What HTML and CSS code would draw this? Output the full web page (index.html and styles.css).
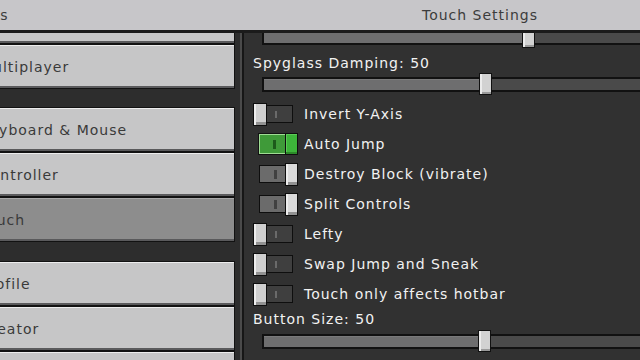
FILE: index.html
```html
<!DOCTYPE html>
<html>
<head>
<meta charset="utf-8">
<link rel="stylesheet" href="styles.css">
</head>
<body>
<div class="screen">
  <header class="header">
    <div class="header-left"><span class="header-back">Settings</span></div>
    <div class="header-title">Touch Settings</div>
  </header>
  <main class="main">
    <nav class="nav">
      <div class="nav-list">
        <div class="group group-first">
          <div class="nav-btn">Video</div>
          <div class="nav-btn">Multiplayer</div>
        </div>
        <div class="group group-mid">
          <div class="nav-btn">Keyboard &amp; Mouse</div>
          <div class="nav-btn">Controller</div>
          <div class="nav-btn is-active">Touch</div>
        </div>
        <div class="group group-last">
          <div class="nav-btn">Profile</div>
          <div class="nav-btn">Creator</div>
          <div class="nav-btn">Accessibility</div>
        </div>
      </div>
    </nav>
    <div class="divider"></div>
    <section class="panel">
      <div class="slider slider-top">
        <div class="slider-fill" style="width:260px"></div>
        <div class="slider-knob"></div>
        <div class="slider-rest"></div>
      </div>
      <div class="setting-label label-spyglass">Spyglass Damping: 50</div>
      <div class="slider slider-mid">
        <div class="slider-fill" style="width:217px"></div>
        <div class="slider-knob"></div>
        <div class="slider-rest"></div>
      </div>
      <div class="toggles">
        <div class="toggle-row">
          <div class="toggle is-off"><div class="knob"></div><div class="track"><div class="notch"></div></div></div>
          <div class="toggle-label">Invert Y-Axis</div>
        </div>
        <div class="toggle-row">
          <div class="toggle is-on"><div class="track"><div class="notch"></div></div><div class="knob"></div></div>
          <div class="toggle-label">Auto Jump</div>
        </div>
        <div class="toggle-row">
          <div class="toggle is-locked"><div class="track"><div class="notch"></div></div><div class="knob"></div></div>
          <div class="toggle-label">Destroy Block (vibrate)</div>
        </div>
        <div class="toggle-row">
          <div class="toggle is-locked"><div class="track"><div class="notch"></div></div><div class="knob"></div></div>
          <div class="toggle-label">Split Controls</div>
        </div>
        <div class="toggle-row">
          <div class="toggle is-off"><div class="knob"></div><div class="track"><div class="notch"></div></div></div>
          <div class="toggle-label">Lefty</div>
        </div>
        <div class="toggle-row">
          <div class="toggle is-off"><div class="knob"></div><div class="track"><div class="notch"></div></div></div>
          <div class="toggle-label">Swap Jump and Sneak</div>
        </div>
        <div class="toggle-row">
          <div class="toggle is-off"><div class="knob"></div><div class="track"><div class="notch"></div></div></div>
          <div class="toggle-label">Touch only affects hotbar</div>
        </div>
      </div>
      <div class="setting-label label-size">Button Size: 50</div>
      <div class="slider slider-bottom">
        <div class="slider-fill" style="width:216px"></div>
        <div class="slider-knob"></div>
        <div class="slider-rest"></div>
      </div>
    </section>
  </main>
</div>
</body>
</html>
```
FILE: styles.css
```css
html, body {
  margin: 0;
  padding: 0;
}
body {
  width: 640px;
  height: 360px;
  overflow: hidden;
  background: #303030;
  font-family: "DejaVu Sans", "Noto Sans", sans-serif;
  font-size: 14px;
  letter-spacing: 1px;
}
.screen {
  width: 640px;
  height: 360px;
  display: flex;
  flex-direction: column;
}
.header {
  display: flex;
  align-items: center;
  height: 30px;
  flex-shrink: 0;
  background: #c7c6c9;
  border-bottom: 3px solid #1b1b1b;
  color: #3c3c3c;
  white-space: nowrap;
}
.header-left {
  width: 244px;
  overflow: hidden;
  flex-shrink: 0;
}
.header-back {
  display: inline-block;
  margin-left: -57px;
}
.header-title {
  flex: 1;
  text-align: center;
  padding-left: 76px;
}
.main {
  display: flex;
  flex: 1;
  min-height: 0;
}
.nav {
  width: 240px;
  flex-shrink: 0;
  overflow: hidden;
  background: #2d2d2d;
}
.nav-list {
  margin-left: -40px;
  width: 275px;
  display: flex;
  flex-direction: column;
}
.group {
  display: flex;
  flex-direction: column;
}
.group-first {
  margin-top: -34px;
}
.group-mid {
  margin-top: 18px;
}
.group-last {
  margin-top: 19px;
}
.nav-btn {
  height: 45px;
  box-sizing: border-box;
  flex-shrink: 0;
  border: 1px solid #121212;
  background: #c6c6c7;
  box-shadow: inset 0 1px #ededed, inset 0 -2px #5a5a5c;
  color: #3a3a3a;
  padding-left: 19px;
  display: flex;
  align-items: center;
  white-space: nowrap;
}
.nav-btn.is-active {
  background: #8d8d8d;
  box-shadow: inset 0 1px #a9a9a9, inset 0 -2px #5a5a5c;
}
.divider {
  width: 0;
  border-left: 2px solid #4a4a4a;
  border-right: 2px solid #161616;
  flex-shrink: 0;
}
.panel {
  flex: 1;
  overflow: hidden;
  padding-left: 9px;
  display: flex;
  flex-direction: column;
  background: #313131;
}
.slider {
  display: flex;
  align-items: center;
  height: 22px;
  margin-left: 9px;
  width: 440px;
  flex-shrink: 0;
}
.slider-top {
  margin-top: -7px;
}
.slider-mid {
  margin-top: 2px;
}
.slider-bottom {
  margin-top: 3px;
}
.slider-fill {
  height: 15px;
  box-sizing: border-box;
  border: 2px solid #111;
  border-right: none;
  background: #6e6e6f;
  box-shadow: inset 0 1px #7a7a7b;
  flex-shrink: 0;
}
.slider-knob {
  width: 13px;
  height: 22px;
  box-sizing: border-box;
  border: 1px solid #111;
  background: #d2d2d2;
  box-shadow: inset 2px 0 #ececec, inset 0 -2px #9a9a9a;
  flex-shrink: 0;
}
.slider-rest {
  flex: 1;
  height: 15px;
  box-sizing: border-box;
  border: 2px solid #111;
  border-left: none;
  background: #4a4a4a;
}
.setting-label {
  height: 16px;
  line-height: 16px;
  color: #f2f2f2;
  white-space: nowrap;
  flex-shrink: 0;
}
.label-spyglass {
  margin-top: 7px;
}
.label-size {
  margin-top: 2px;
}
.toggles {
  margin-top: 4px;
  display: flex;
  flex-direction: column;
}
.toggle-row {
  display: flex;
  align-items: center;
  height: 30px;
}
.toggle {
  width: 51px;
  box-sizing: border-box;
  display: flex;
  align-items: center;
  flex-shrink: 0;
}
.toggle.is-on,
.toggle.is-locked {
  padding-left: 6px;
}
.toggle-label {
  color: #f2f2f2;
  white-space: nowrap;
}
.knob {
  width: 14px;
  height: 23px;
  box-sizing: border-box;
  border: 1px solid #0e0e0e;
  background: #cfcfcf;
  box-shadow: inset 2px 0 #ededed, inset 0 -3px #929292;
  flex-shrink: 0;
}
.track {
  width: 26px;
  height: 18px;
  box-sizing: border-box;
  border: 1px solid #0e0e0e;
  background: #3f3f3f;
  display: flex;
  align-items: center;
  flex-shrink: 0;
}
.notch {
  width: 2px;
  height: 7px;
  background: #6a6a6a;
}
.is-off .track {
  padding-left: 8px;
  border-left: none;
}
.is-locked .track {
  background: #6b6b6b;
  border-right: none;
  padding-left: 14px;
}
.is-locked .notch {
  background: #404040;
  height: 9px;
  width: 3px;
}
.is-locked .knob {
  width: 13px;
  background: #dadada;
}
.is-on .track {
  height: 20px;
  background: #3f9a39;
  border: 1px solid #9fdc94;
  border-right: none;
  box-shadow: 0 0 0 1px #121212;
  padding-left: 13px;
}
.is-on .notch {
  background: #1d5a1b;
  height: 9px;
  width: 3px;
}
.is-on .knob {
  width: 13px;
  height: 22px;
  background: #3db53a;
  box-shadow: inset 0 -2px #2c8a29, inset 1px 1px #5ccb58;
}
```
